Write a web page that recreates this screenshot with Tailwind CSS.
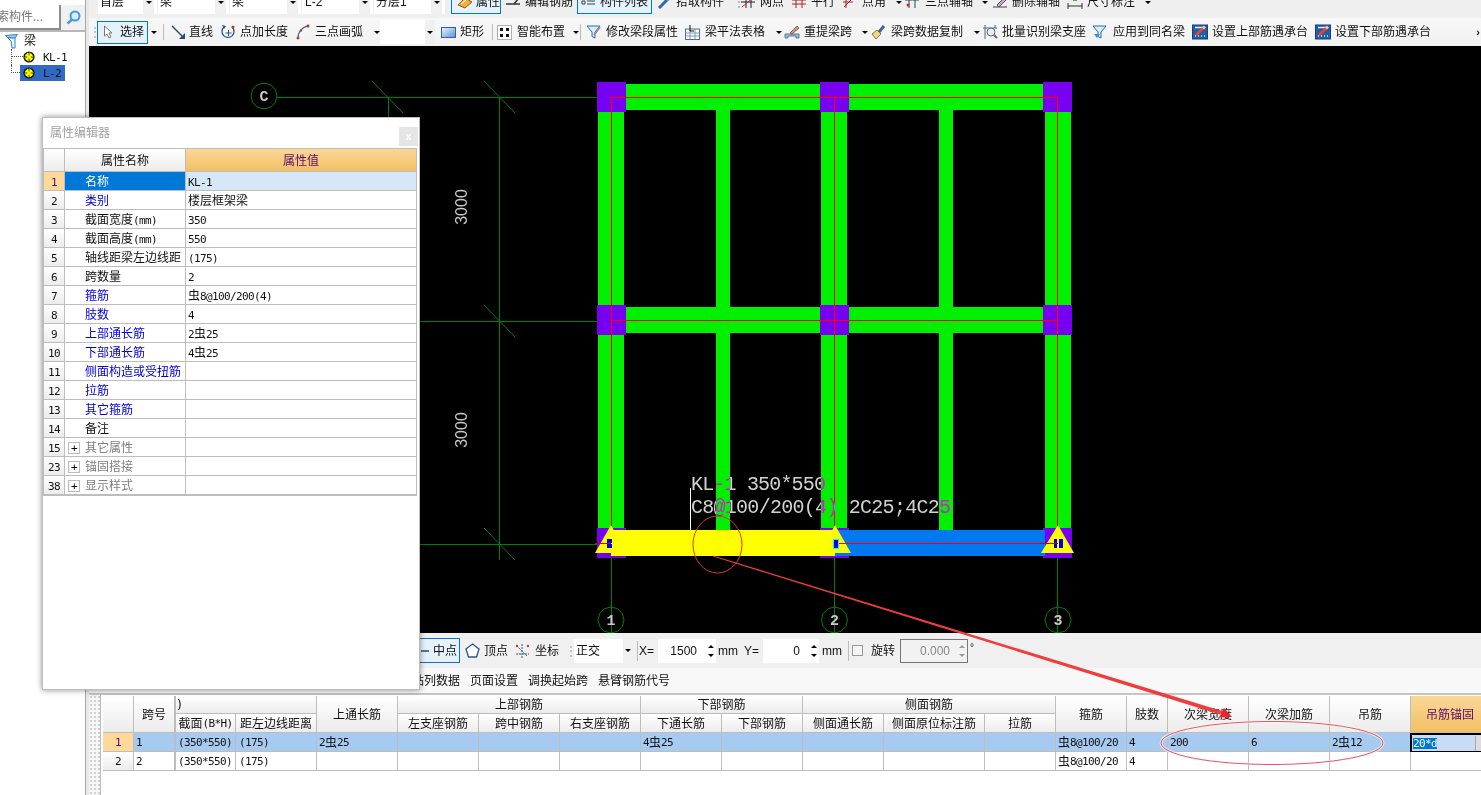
<!DOCTYPE html>
<html lang="zh">
<head>
<meta charset="utf-8">
<title>梁 属性编辑器</title>
<script src="https://cdn.jsdelivr.net/npm/@tailwindcss/browser@4"></script>
</head>
<body class="bg-white">
<div class="relative w-[1481px] h-[795px] overflow-hidden flex bg-white text-[12px] leading-none text-[#111] font-['Liberation_Sans','Noto_Sans_CJK_SC',sans-serif]">

  <!-- shared icons -->
  <svg class="absolute w-0 h-0">
    <defs>
      <polygon id="ax" fill="none" stroke="#008000" points="13,0 11.3,6.5 6.5,11.3 0,13 -6.5,11.3 -11.3,6.5 -13,0 -11.3,-6.5 -6.5,-11.3 0,-13 6.5,-11.3 11.3,-6.5"/>
      <g id="gear"><circle cx="6" cy="6" r="5.6" fill="#111"/><circle cx="6" cy="6" r="4.4" fill="#ff0" stroke="#111" stroke-dasharray="1.5 1.2"/><path d="M6 2v8M2 6h8" stroke="#222" stroke-width=".8"/><circle cx="6" cy="6" r="1.8" fill="#ff0"/></g>
      <g id="rebar"><rect x=".5" y="1" width="15" height="14" fill="#1f5fa8" stroke="#17437a"/><path d="M3 3.500h10M3 12h1M6 12h1M9 12h1M12 12h1" stroke="#e6f0fa" stroke-width="1.500"/><path d="M4 11 11 4.500" stroke="#e8432f" stroke-width="3"/><path d="M11 4.500l2-2" stroke="#f6c0a0" stroke-width="3"/></g>
      <g id="funnel"><path d="M1 2h13l-5 6v6l-3-1.5V8z" fill="#d8ecfa" stroke="#2b6ca8"/></g>
    </defs>
  </svg>

  <!-- left tree panel -->
  <aside class="w-[89px] shrink-0 flex flex-col border-r-[3px] border-[#e8e8e8]">
    <div class="w-[86px] h-full border-r border-[#a8a8a8] flex flex-col">
      <div class="h-[32px] shrink-0 pt-[5px] border-b-2 border-[#b8b8b8] flex">
        <div class="w-[61px] h-[25px] overflow-hidden flex items-center border-r-2 border-b-2 border-[#8c8c8c] text-[#777]"><span class="-ml-[15px] whitespace-nowrap">搜索构件...</span></div>
        <div class="w-[24px] h-[25px] bg-[#f1f1f1] flex items-center justify-center">
          <svg class="w-[15px] h-[15px]" viewBox="0 0 15 15"><circle cx="9" cy="6" r="4.5" fill="#d9eefc" stroke="#3f9be0" stroke-width="2"/><path d="M6 9.500 1.500 13.500" stroke="#3f9be0" stroke-width="2.400"/></svg>
        </div>
      </div>
      <div class="pt-[1px]">
        <div class="h-[16px] flex items-center pl-[5px] gap-[6px]">
          <svg class="w-[13px] h-[15px]" viewBox="0 0 13 15"><path d="M.5 1.500 12.500.5 10 4H3z" fill="#9fd0ef" stroke="#2f83c0"/><path d="M3 4h7v10H7L6 7z" fill="#e6f4fc" stroke="#2f83c0"/></svg>
          <span>梁</span>
        </div>
        <div class="ml-[11px]">
          <div class="h-[16px] flex items-center">
            <div class="self-stretch w-[12px] border-l border-dotted border-[#555]"><div class="h-1/2 border-b border-dotted border-[#555]"></div></div>
            <svg class="w-[12px] h-[12px]" viewBox="0 0 12 12"><use href="#gear"/></svg>
            <span class="ml-[8px] font-['DejaVu_Sans_Mono'] text-[11px] tracking-[-0.62px]">KL-1</span>
          </div>
          <div class="h-[16px] flex items-center">
            <div class="self-start h-1/2 w-[9px] border-l border-b border-dotted border-[#555]"></div>
            <div class="w-[45px] h-[16px] bg-[#316ac5] flex items-center pl-[3px]">
              <svg class="w-[12px] h-[12px]" viewBox="0 0 12 12"><use href="#gear"/></svg>
              <span class="ml-[8px] font-['DejaVu_Sans_Mono'] text-[11px] tracking-[-0.62px]">L-2</span>
            </div>
          </div>
        </div>
      </div>
    </div>
  </aside>

  <main class="flex-1 min-w-0 flex flex-col">
    <!-- toolbar row 1, cut by the window top -->
    <div class="h-[18px] shrink-0 overflow-hidden bg-[#efefef]">
      <div class="-mt-[10px] h-[24px] flex items-center whitespace-nowrap">
        <div class="w-[9px]"></div>
        <div class="w-[59px] h-full bg-white flex items-center pl-[2px] relative"><span>首层</span><span class="ml-auto mr-[3px] w-[11px] h-full bg-[#f0f0f0] flex items-center justify-center"><span class="border-x-[3px] border-t-[3px] border-x-transparent border-t-black"></span></span></div>
        <div class="ml-px w-[71px] h-full bg-white flex items-center pl-[2px]"><span>梁</span><span class="ml-auto mr-[3px] w-[11px] h-full bg-[#f0f0f0] flex items-center justify-center"><span class="border-x-[3px] border-t-[3px] border-x-transparent border-t-black"></span></span></div>
        <div class="ml-px w-[71px] h-full bg-white flex items-center pl-[2px]"><span>梁</span><span class="ml-auto mr-[3px] w-[11px] h-full bg-[#f0f0f0] flex items-center justify-center"><span class="border-x-[3px] border-t-[3px] border-x-transparent border-t-black"></span></span></div>
        <div class="ml-px w-[71px] h-full bg-white flex items-center pl-[3px]"><span>L-2</span><span class="ml-auto mr-[3px] w-[11px] h-full bg-[#f0f0f0] flex items-center justify-center"><span class="border-x-[3px] border-t-[3px] border-x-transparent border-t-black"></span></span></div>
        <div class="ml-px w-[71px] h-full bg-white flex items-center pl-[2px]"><span>分层1</span><span class="ml-auto mr-[3px] w-[11px] h-full bg-[#f0f0f0] flex items-center justify-center"><span class="border-x-[3px] border-t-[3px] border-x-transparent border-t-black"></span></span></div>
        <div class="ml-[6px] w-[50px] h-full border border-[#0078d7] bg-[#e5f1fb] flex items-center pl-[5px] gap-[3px]">
          <svg class="w-[16px] h-[14px]" viewBox="0 0 16 14"><path d="M1 10 8 3l7 4-7 6z" fill="#f0b040" stroke="#8a5a10"/><path d="M4 9l5-4" stroke="#fff"/></svg><span>属性</span>
        </div>
        <div class="ml-[4px] w-[72px] flex items-center gap-[4px]">
          <svg class="w-[16px] h-[14px]" viewBox="0 0 16 14"><path d="M1 9h14M9 9 14 3" stroke="#333" stroke-width="1.500" fill="none"/></svg><span>编辑钢筋</span>
        </div>
        <div class="w-[75px] h-full border border-[#0078d7] bg-[#e5f1fb] flex items-center pl-[3px] gap-[4px]">
          <svg class="w-[15px] h-[14px]" viewBox="0 0 15 14"><path d="M1 6h3v3H1zM6 6h8M6 9h8" stroke="#345" fill="none"/></svg><span>构件列表</span>
        </div>
        <div class="ml-[5px] w-[76px] flex items-center gap-[4px]">
          <svg class="w-[15px] h-[14px]" viewBox="0 0 15 14"><path d="M2 13 10 5" stroke="#2b6ca8" stroke-width="3"/><path d="M10 5l3-3" stroke="#666" stroke-width="3"/></svg><span>拾取构件</span>
        </div>
        <div class="w-[8px] text-[#999] text-center">⋮</div>
        <div class="w-[51px] flex items-center gap-[5px]">
          <svg class="w-[14px] h-[14px]" viewBox="0 0 14 14"><path d="M5 1v12M10 1v12M0 7h14" stroke="#223" fill="none"/><path d="M1 12 13 2" stroke="#c22"/></svg><span>网点</span>
        </div>
        <div class="w-[51px] flex items-center gap-[5px]">
          <svg class="w-[14px] h-[14px]" viewBox="0 0 14 14"><path d="M4 1v12M10 1v12M0 5h14M0 9h14" stroke="#a22" fill="none"/></svg><span>平行</span>
        </div>
        <div class="w-[62px] flex items-center gap-[4px]">
          <svg class="w-[15px] h-[14px]" viewBox="0 0 15 14"><path d="M1 12 11 2M3 1v12M0 7h10" stroke="#a22" fill="none"/></svg><span>点角</span><span class="ml-[6px] border-x-[3px] border-t-[3px] border-x-transparent border-t-black"></span>
        </div>
        <div class="w-[87px] flex items-center gap-[6px]">
          <svg class="w-[14px] h-[14px]" viewBox="0 0 14 14"><path d="M4 1v12M0 5h14M10 1v12" stroke="#345" fill="none"/><circle cx="3" cy="10" r="1.500" fill="#c22"/></svg><span>三点辅轴</span><span class="ml-[3px] border-x-[3px] border-t-[3px] border-x-transparent border-t-black"></span>
        </div>
        <div class="w-[75px] flex items-center gap-[4px]">
          <svg class="w-[16px] h-[14px]" viewBox="0 0 16 14"><path d="M1 12h14" stroke="#345"/><path d="M5 10l7-7 2 2-7 7z" fill="#c9a0d8" stroke="#654"/></svg><span>删除辅轴</span>
        </div>
        <div class="flex items-center gap-[4px]">
          <svg class="w-[16px] h-[14px]" viewBox="0 0 16 14"><path d="M1 11h14M1 8v6M15 8v6" stroke="#333" fill="none"/><rect x="6" y="2" width="4" height="4" fill="#4caf50"/></svg><span>尺寸标注</span><span class="ml-[6px] border-x-[3px] border-t-[3px] border-x-transparent border-t-black"></span>
        </div>
      </div>
    </div>

    <!-- toolbar row 2 -->
    <div class="h-[28px] shrink-0 flex items-center whitespace-nowrap bg-linear-to-b from-[#f7f7f7] to-[#f2f2f2]">
      <div class="w-[8px] text-[#aaa] text-center">⋮</div>
      <div class="w-[51px] h-[23px] border border-[#0078d7] bg-[#e5f1fb] flex items-center pl-[5px] gap-[7px]">
        <svg class="w-[10px] h-[14px]" viewBox="0 0 10 14"><path d="M1.500 1v10l2.500-2 2 4 2-1-2-4h3z" fill="#fff" stroke="#777"/></svg><span>选择</span>
      </div>
      <div class="w-[11px] flex justify-center"><span class="border-x-[3px] border-t-[3px] border-x-transparent border-t-black"></span></div>
      <div class="w-[9px] flex justify-center"><span class="w-px h-[16px] bg-[#bbb]"></span></div>
      <div class="ml-[3px] w-[50px] flex items-center gap-[3px]">
        <svg class="w-[15px] h-[15px]" viewBox="0 0 15 15"><path d="M1 1 13 13" stroke="#244a78" stroke-width="1.400"/><path d="M14 14H8l6-6z" fill="#244a78"/></svg><span>直线</span>
      </div>
      <div class="w-[75px] flex items-center gap-[4px]">
        <svg class="w-[15px] h-[16px]" viewBox="0 0 15 16"><path d="M3 3 A6 6 0 1 0 11 3" fill="none" stroke="#2c5687" stroke-width="1.300"/><path d="M7.500 6v6M4.500 9h6" stroke="#2c5687"/><path d="M1 1l4 1-2 3z" fill="#2c5687"/><circle cx="12" cy="3" r="1.500" fill="#c0392b"/></svg><span>点加长度</span>
      </div>
      <div class="w-[84px] flex items-center gap-[5px]">
        <svg class="w-[14px] h-[16px]" viewBox="0 0 14 16"><path d="M2 14 C2 8 6 3 12 2" fill="none" stroke="#3d6d9e" stroke-width="1.300"/><circle cx="2" cy="14" r="1.500" fill="#c0392b"/><circle cx="5" cy="6.500" r="1.200" fill="#c0392b"/><circle cx="12" cy="2" r="1.500" fill="#c0392b"/></svg><span>三点画弧</span><span class="ml-[6px] border-x-[3px] border-t-[3px] border-x-transparent border-t-black"></span>
      </div>
      <div class="w-[55px] h-[24px] bg-white flex items-center justify-end"><span class="w-[10px] h-full bg-[#f0f0f0] flex items-center justify-center"><span class="border-x-[3px] border-t-[3px] border-x-transparent border-t-black"></span></span></div>
      <div class="ml-[6px] w-[51px] flex items-center gap-[4px]">
        <svg class="w-[15px] h-[11px]" viewBox="0 0 15 11"><defs><linearGradient id="rg" x1="0" y1="0" x2="1" y2="1"><stop offset="0" stop-color="#eef4fc"/><stop offset="1" stop-color="#5c8fd6"/></linearGradient></defs><rect x=".5" y=".5" width="14" height="10" fill="url(#rg)" stroke="#33619e"/></svg><span>矩形</span>
      </div>
      <div class="w-[5px]"><span class="block w-px h-[16px] bg-[#bbb]"></span></div>
      <div class="w-[83px] flex items-center gap-[5px]">
        <svg class="w-[15px] h-[15px]" viewBox="0 0 15 15"><rect x=".5" y=".5" width="14" height="14" fill="#fff" stroke="#666" stroke-dasharray="1 1"/><path d="M3 3h3v3H3zM9 3h3v3H9zM3 9h3v3H3zM9 9h3v3H9z" fill="#111"/></svg><span>智能布置</span><span class="ml-[3px] border-x-[3px] border-t-[3px] border-x-transparent border-t-black"></span>
      </div>
      <div class="w-[6px]"><span class="block w-px h-[16px] bg-[#bbb]"></span></div>
      <div class="w-[99px] flex items-center gap-[4px]">
        <svg class="w-[16px] h-[16px]" viewBox="0 0 16 16"><use href="#funnel"/><path d="M8 11 14 3" stroke="#a88" stroke-width="2"/></svg><span>修改梁段属性</span>
      </div>
      <div class="w-[99px] flex items-center gap-[5px]">
        <svg class="w-[15px] h-[15px]" viewBox="0 0 15 15"><rect x=".5" y="4" width="14" height="10.500" fill="#fff" stroke="#4a6e96"/><path d="M.5 8h14M.5 11h14M5 4v10M10 4v10" stroke="#7d9ab8"/><path d="M5 0v6h4" stroke="#111" fill="none"/></svg><span>梁平法表格</span><span class="ml-[6px] border-x-[3px] border-t-[3px] border-x-transparent border-t-black"></span>
      </div>
      <div class="w-[87px] flex items-center gap-[4px]">
        <svg class="w-[16px] h-[16px]" viewBox="0 0 16 16"><path d="M1 14V10h14v4h-3v-2H4v2z" fill="#9db8d4" stroke="#5d7f9f"/><path d="M6 9 13 2l2 2-7 6z" fill="#d99a7b" stroke="#8a5a4a"/></svg><span>重提梁跨</span><span class="ml-[6px] border-x-[3px] border-t-[3px] border-x-transparent border-t-black"></span>
      </div>
      <div class="w-[111px] flex items-center gap-[5px]">
        <svg class="w-[15px] h-[16px]" viewBox="0 0 15 16"><path d="M1 10 6 6l4 4-5 5z" fill="#e8d98a" stroke="#8f7f3a"/><path d="M8 8l5-6" stroke="#4a5f96" stroke-width="3"/></svg><span>梁跨数据复制</span><span class="ml-[6px] border-x-[3px] border-t-[3px] border-x-transparent border-t-black"></span>
      </div>
      <div class="w-[110px] flex items-center gap-[4px]">
        <svg class="w-[16px] h-[16px]" viewBox="0 0 16 16"><path d="M1 4h14M3 1v14M13 1v3" stroke="#3d6d9e" fill="none"/><circle cx="9" cy="8" r="4" fill="#e8eef4" stroke="#667"/><path d="M12 11l3 3" stroke="#667" stroke-width="2"/></svg><span>批量识别梁支座</span>
      </div>
      <div class="w-[100px] flex items-center gap-[5px]">
        <svg class="w-[16px] h-[16px]" viewBox="0 0 16 16"><use href="#funnel"/><path d="M2 10l3 4 3-4z" fill="#3d8fd6"/></svg><span>应用到同名梁</span>
      </div>
      <div class="w-[123px] flex items-center gap-[4px]">
        <svg class="w-[16px] h-[16px]" viewBox="0 0 16 16"><use href="#rebar"/></svg><span>设置上部筋遇承台</span>
      </div>
      <div class="flex items-center gap-[4px]">
        <svg class="w-[16px] h-[16px]" viewBox="0 0 16 16"><use href="#rebar"/></svg><span>设置下部筋遇承台</span>
      </div>
      <span class="ml-auto mr-[1px] text-[11px] font-bold">›</span>
    </div>

    <!-- drawing canvas -->
    <div class="h-[587px] shrink-0 relative bg-black overflow-hidden">
      <svg class="absolute inset-0 w-full h-full" viewBox="89 46 1392 587" shape-rendering="crispEdges">
        <g stroke="#008000" fill="none">
          <path d="M277 97.500H611M388.500 97V117M499.500 97V560M420 321.500H598M420 544.500H598M611.500 556V633M834.500 556V633M1057.500 556V633"/>
          <g shape-rendering="auto"><path d="M372 81 403 113M484 81 515 113M484 305 515 337M484 528 515 560"/></g>
        </g>
        <g fill="#00f000">
          <rect x="598" y="112" width="26" height="193"/><rect x="598" y="335" width="26" height="195"/>
          <rect x="821" y="112" width="26" height="193"/><rect x="821" y="335" width="26" height="195"/>
          <rect x="1045" y="112" width="26" height="193"/><rect x="1045" y="335" width="26" height="195"/>
          <rect x="716" y="110" width="14" height="420"/><rect x="939" y="110" width="14" height="420"/>
          <rect x="626" y="84" width="194" height="26"/><rect x="849" y="84" width="194" height="26"/>
          <rect x="626" y="307" width="194" height="26"/><rect x="849" y="307" width="194" height="26"/>
        </g>
        <g fill="#7800f0">
          <rect x="597" y="82" width="29" height="30"/><rect x="820" y="82" width="29" height="30"/><rect x="1043" y="82" width="29" height="30"/>
          <rect x="597" y="305" width="29" height="30"/><rect x="820" y="305" width="29" height="30"/><rect x="1043" y="305" width="29" height="30"/>
          <rect x="597" y="528" width="29" height="30"/><rect x="820" y="528" width="29" height="30"/><rect x="1043" y="528" width="29" height="30"/>
        </g>
        <rect x="835" y="530" width="210" height="26" fill="#0078f0"/>
        <rect x="611" y="530" width="224" height="26" fill="#ff0"/>
        <g fill="#ff0" shape-rendering="auto">
          <polygon points="611,525 626,553 595,553"/>
          <polygon points="835,525 851,553 820,553"/>
          <polygon points="1058,525 1074,553 1041,553"/>
        </g>
        <path d="M611 97.500H1058M611 320.500H1058M835 543.500H1058M611.500 97V526M834.500 97V526M1057.500 97V526" stroke="#f00" fill="none"/>
        <path d="M690.500 488V530" stroke="#fff" fill="none"/>
        <g fill="#0000f0">
          <rect x="607" y="539" width="5" height="4"/><rect x="607" y="544" width="5" height="4"/>
          <rect x="833" y="539" width="5" height="9" stroke="#0ff"/>
          <rect x="1054" y="539" width="3" height="9"/><rect x="1059" y="539" width="4" height="9"/>
        </g>
        <path d="M611 543.500H595M1040 543.500H1058" stroke="#c00"/>
        <ellipse cx="717.500" cy="544.500" rx="24.500" ry="28.500" fill="none" stroke="#d23c2a" shape-rendering="auto"/>
        <g shape-rendering="auto">
          <use href="#ax" x="264" y="96"/><use href="#ax" x="611" y="620"/><use href="#ax" x="834.500" y="620"/><use href="#ax" x="1058" y="620"/>
          <g fill="#c8c8c8" font-family="'Liberation Mono',monospace" font-weight="700" text-anchor="middle">
            <text x="264" y="101" font-size="15">C</text>
            <text x="611" y="625" font-size="15">1</text>
            <text x="834.500" y="625" font-size="15">2</text>
            <text x="1058" y="625" font-size="15">3</text>
          </g>
          <g fill="#c8c8c8" font-family="'Liberation Sans',sans-serif" text-anchor="middle" font-size="16">
            <text transform="translate(467 207) rotate(-90)">3000</text>
            <text transform="translate(467 430) rotate(-90)">3000</text>
          </g>
          <g fill="#d2d2d2" font-family="'Liberation Mono',monospace" font-size="20" class="mix-blend-difference">
            <text x="691" y="490" textLength="135">KL-1 350*550</text>
            <text x="691" y="513" textLength="260">C8@100/200(4) 2C25;4C25</text>
          </g>
        </g>
      </svg>
    </div>

    <!-- snap / coordinate bar -->
    <div class="h-[35px] shrink-0 bg-[#f0f0f0] flex items-center whitespace-nowrap pl-[330px]">
      <div class="w-[41px] h-[25px] border border-[#0078d7] bg-[#e5f1fb] flex items-center pl-[1px] gap-[4px]">
        <svg class="w-[8px] h-[6px]" viewBox="0 0 8 6"><path d="M0 3h8" stroke="#244a78" stroke-width="1.500"/></svg><span>中点</span>
      </div>
      <div class="ml-[5px] w-[50px] flex items-center gap-[4px]">
        <svg class="w-[15px] h-[15px]" viewBox="0 0 15 15"><path d="M7.500 1 14 6 11.500 14H3.500L1 6z" fill="#fff" stroke="#2c5687" stroke-width="1.300"/></svg><span>顶点</span>
      </div>
      <div class="w-[50px] flex items-center gap-[5px]">
        <svg class="w-[15px] h-[16px]" viewBox="0 0 15 16"><path d="M7 1v14M1 11h13M2 3l10 10" stroke="#2c5687" stroke-dasharray="2 1" fill="none"/><circle cx="2" cy="3" r="1.200" fill="#c0392b"/><circle cx="13" cy="3" r="1.200" fill="#c0392b"/></svg><span>坐标</span>
      </div>
      <div class="w-[9px] text-[#aaa] text-center">⋮</div>
      <div class="w-[58px] h-[24px] bg-white flex items-center pl-[2px]"><span>正交</span><span class="ml-auto h-full w-[9px] bg-[#f0f0f0] flex items-center justify-center"><span class="border-x-[3px] border-t-[3px] border-x-transparent border-t-black"></span></span></div>
      <div class="ml-[5px] w-px h-[20px] bg-[#bbb]"></div>
      <span class="ml-[1px] w-[19px]">X=</span>
      <div class="w-[47px] h-[24px] bg-white flex items-center justify-end pr-[8px]">1500</div>
      <div class="w-[11px] h-[24px] bg-white flex flex-col items-center justify-center gap-[6px]"><span class="border-x-[3px] border-b-[3px] border-x-transparent border-b-black"></span><span class="border-x-[3px] border-t-[3px] border-x-transparent border-t-black"></span></div>
      <span class="ml-[2px] w-[26px]">mm</span>
      <span class="w-[19px]">Y=</span>
      <div class="w-[45px] h-[24px] bg-white flex items-center justify-end pr-[8px]">0</div>
      <div class="w-[11px] h-[24px] bg-white flex flex-col items-center justify-center gap-[6px]"><span class="border-x-[3px] border-b-[3px] border-x-transparent border-b-black"></span><span class="border-x-[3px] border-t-[3px] border-x-transparent border-t-black"></span></div>
      <span class="ml-[3px] w-[26px]">mm</span>
      <div class="w-px h-[20px] bg-[#bbb]"></div>
      <div class="ml-[3px] w-[11px] h-[11px] border border-[#999] bg-[#f4f4f4]"></div>
      <span class="ml-[8px] w-[24px]">旋转</span>
      <div class="ml-[5px] w-[68px] h-[24px] border border-[#777] bg-[#f2f2f2] flex items-center justify-end pr-[1px] text-[#888]"><span>0.000</span><span class="ml-[7px] flex flex-col items-center gap-[6px] w-[9px]"><span class="border-x-[3px] border-b-[3px] border-x-transparent border-b-[#999]"></span><span class="border-x-[3px] border-t-[3px] border-x-transparent border-t-[#999]"></span></span></div>
      <span class="ml-[2px] text-[10px] self-start mt-[10px]">°</span>
    </div>

    <!-- table tool row -->
    <div class="h-[25px] shrink-0 bg-[#f8f8f8] flex items-center whitespace-nowrap pl-[311px] gap-[10px]">
      <span>粘贴列数据</span><span>页面设置</span><span>调换起始跨</span><span>悬臂钢筋代号</span>
    </div>

    <!-- span table -->
    <div class="flex-1 min-h-0 flex border-t-2 border-[#c4c4c4] overflow-hidden">
      <div class="w-[12px] shrink-0 border-r border-[#bbb] bg-[#f6f6f6] bg-[radial-gradient(#d0d0d0_1px,transparent_1px)] bg-[length:4px_4px]"></div>
      <div class="w-[2px] shrink-0"></div>
      <div class="grid h-[77px] mt-px grid-cols-[31px_41px_61px_81px_81px_81px_81px_81px_81px_81px_81px_101px_71px_71px_41px_81px_81px_81px_81px] grid-rows-[18px_19px_19px_19px] shrink-0 font-['DejaVu_Sans_Mono','Noto_Sans_CJK_SC',sans-serif] text-[11px] tracking-[-0.62px] [&_i]:not-italic [&_i]:text-[12px] [&_i]:tracking-normal [&>div]:pt-[1px] [&>div]:border-r [&>div]:border-b [&>div]:border-[#bdbdbd] [&>div]:flex [&>div]:items-center">
        <div class="row-span-2 bg-linear-to-b from-white to-[#ececec]"></div>
        <div class="row-span-2 justify-center bg-linear-to-b from-white to-[#ececec]"><i>跨号</i></div>
        <div class="col-span-2 bg-linear-to-b from-white to-[#ececec] border-l border-l-[#bdbdbd]"><i>)</i></div>
        <div class="row-span-2 justify-center bg-linear-to-b from-white to-[#ececec]"><i>上通长筋</i></div>
        <div class="col-span-3 justify-center bg-linear-to-b from-white to-[#ececec]"><i>上部钢筋</i></div>
        <div class="col-span-2 justify-center bg-linear-to-b from-white to-[#ececec]"><i>下部钢筋</i></div>
        <div class="col-span-3 justify-center bg-linear-to-b from-white to-[#ececec]"><i>侧面钢筋</i></div>
        <div class="row-span-2 justify-center bg-linear-to-b from-white to-[#ececec]"><i>箍筋</i></div>
        <div class="row-span-2 justify-center bg-linear-to-b from-white to-[#ececec]"><i>肢数</i></div>
        <div class="row-span-2 justify-center bg-linear-to-b from-white to-[#ececec]"><i>次梁宽度</i></div>
        <div class="row-span-2 justify-center bg-linear-to-b from-white to-[#ececec]"><i>次梁加筋</i></div>
        <div class="row-span-2 justify-center bg-linear-to-b from-white to-[#ececec]"><i>吊筋</i></div>
        <div class="row-span-2 justify-start pl-[15px] bg-linear-to-b from-[#fad797] to-[#f2c063] text-[#5c0a73]"><i>吊筋锚固</i></div>

        <div class="justify-center bg-linear-to-b from-white to-[#ececec] border-l border-l-[#bdbdbd]"><i>截面</i>(B*H)</div>
        <div class="justify-center bg-linear-to-b from-white to-[#ececec]"><i>距左边线距离</i></div>
        <div class="justify-center bg-linear-to-b from-white to-[#ececec]"><i>左支座钢筋</i></div>
        <div class="justify-center bg-linear-to-b from-white to-[#ececec]"><i>跨中钢筋</i></div>
        <div class="justify-center bg-linear-to-b from-white to-[#ececec]"><i>右支座钢筋</i></div>
        <div class="justify-center bg-linear-to-b from-white to-[#ececec]"><i>下通长筋</i></div>
        <div class="justify-center bg-linear-to-b from-white to-[#ececec]"><i>下部钢筋</i></div>
        <div class="justify-center bg-linear-to-b from-white to-[#ececec]"><i>侧面通长筋</i></div>
        <div class="justify-center bg-linear-to-b from-white to-[#ececec]"><i>侧面原位标注筋</i></div>
        <div class="justify-center bg-linear-to-b from-white to-[#ececec]"><i>拉筋</i></div>

        <div class="justify-center bg-[#ffd89a] text-[#5c0a73]">1</div>
        <div class="bg-[#a6caf0] pl-[2px]">1</div>
        <div class="bg-[#a6caf0] pl-[2px] border-l border-l-black">(350*550)</div>
        <div class="bg-[#a6caf0] pl-[3px]">(175)</div>
        <div class="bg-[#a6caf0] pl-[2px]">2<i>虫</i>25</div>
        <div class="bg-[#a6caf0]"></div><div class="bg-[#a6caf0]"></div><div class="bg-[#a6caf0]"></div>
        <div class="bg-[#a6caf0] pl-[2px]">4<i>虫</i>25</div>
        <div class="bg-[#a6caf0]"></div><div class="bg-[#a6caf0]"></div><div class="bg-[#a6caf0]"></div><div class="bg-[#a6caf0]"></div>
        <div class="bg-[#a6caf0] pl-[2px]"><i>虫</i>8@100/20</div>
        <div class="bg-[#a6caf0] pl-[2px]">4</div>
        <div class="bg-[#a6caf0] pl-[2px]">200</div>
        <div class="bg-[#a6caf0] pl-[2px]">6</div>
        <div class="bg-[#a6caf0] pl-[2px]">2<i>虫</i>12</div>
        <div class="bg-[#c9dcf5] pl-[1px] border-2 !border-black -ml-px"><span class="bg-[#0078d7] text-white">20*d</span><span class="ml-[38px] w-[8px] h-full bg-[#dcdcdc] border-l border-[#aaa]"></span></div>

        <div class="justify-center bg-linear-to-b from-white to-[#ececec]">2</div>
        <div class="pl-[2px]">2</div>
        <div class="pl-[2px] border-l border-l-black">(350*550)</div>
        <div class="pl-[3px]">(175)</div>
        <div></div><div></div><div></div><div></div><div></div><div></div><div></div><div></div><div></div>
        <div class="pl-[2px]"><i>虫</i>8@100/20</div>
        <div class="pl-[2px]">4</div>
        <div></div><div></div><div></div><div></div>
      </div>
    </div>
  </main>

  <!-- floating property editor -->
  <section class="absolute left-[42px] top-[117px] w-[378px] h-[573px] bg-white border border-[#bdbdbd] shadow-[0_0_6px_rgba(0,0,0,0.45)]">
    <div class="h-[30px] flex items-center pl-[7px] text-[#a3a3a3]">
      <span>属性编辑器</span>
      <div class="ml-auto mr-[1px] mt-[6px] w-[19px] h-[19px] bg-[#e5e5e5] text-white font-bold flex items-center justify-center text-[11px]">x</div>
    </div>
    <div class="w-[374px] border border-[#bdbdbd] grid grid-cols-[21px_121px_231px] grid-rows-[23px_repeat(17,19px)] font-['DejaVu_Sans_Mono','Noto_Sans_CJK_SC',sans-serif] text-[11px] tracking-[-0.62px] [&_i]:not-italic [&_i]:text-[12px] [&_i]:tracking-normal [&>div]:pt-[2px] [&>div]:border-r [&>div]:border-b [&>div]:border-[#bdbdbd] [&>div]:flex [&>div]:items-center">
      <div class="bg-linear-to-b from-white to-[#ececec]"></div>
      <div class="justify-center bg-linear-to-b from-white to-[#ececec]"><i>属性名称</i></div>
      <div class="justify-center bg-linear-to-b from-[#fad797] to-[#f2c063] text-[#5c0a73]"><i>属性值</i></div>

      <div class="justify-center bg-[#ffd89a] text-[#5c0a73]">1</div><div class="pl-[20px] bg-[#0078d7] text-white"><i>名称</i></div><div class="pl-[2px] bg-[#d6e8f8]">KL-1</div>
      <div class="justify-center bg-linear-to-b from-white to-[#ececec]">2</div><div class="pl-[20px] text-[#0000e0]"><i>类别</i></div><div class="pl-[2px]"><i>楼层框架梁</i></div>
      <div class="justify-center bg-linear-to-b from-white to-[#ececec]">3</div><div class="pl-[20px]"><i>截面宽度</i>(mm)</div><div class="pl-[2px]">350</div>
      <div class="justify-center bg-linear-to-b from-white to-[#ececec]">4</div><div class="pl-[20px]"><i>截面高度</i>(mm)</div><div class="pl-[2px]">550</div>
      <div class="justify-center bg-linear-to-b from-white to-[#ececec]">5</div><div class="pl-[20px]"><i>轴线距梁左边线距</i></div><div class="pl-[2px]">(175)</div>
      <div class="justify-center bg-linear-to-b from-white to-[#ececec]">6</div><div class="pl-[20px]"><i>跨数量</i></div><div class="pl-[2px]">2</div>
      <div class="justify-center bg-linear-to-b from-white to-[#ececec]">7</div><div class="pl-[20px] text-[#0000e0]"><i>箍筋</i></div><div class="pl-[2px]"><i>虫</i>8@100/200(4)</div>
      <div class="justify-center bg-linear-to-b from-white to-[#ececec]">8</div><div class="pl-[20px] text-[#0000e0]"><i>肢数</i></div><div class="pl-[2px]">4</div>
      <div class="justify-center bg-linear-to-b from-white to-[#ececec]">9</div><div class="pl-[20px] text-[#0000e0]"><i>上部通长筋</i></div><div class="pl-[2px]">2<i>虫</i>25</div>
      <div class="justify-center bg-linear-to-b from-white to-[#ececec]">10</div><div class="pl-[20px] text-[#0000e0]"><i>下部通长筋</i></div><div class="pl-[2px]">4<i>虫</i>25</div>
      <div class="justify-center bg-linear-to-b from-white to-[#ececec]">11</div><div class="pl-[20px] text-[#0000e0]"><i>侧面构造或受扭筋</i></div><div></div>
      <div class="justify-center bg-linear-to-b from-white to-[#ececec]">12</div><div class="pl-[20px] text-[#0000e0]"><i>拉筋</i></div><div></div>
      <div class="justify-center bg-linear-to-b from-white to-[#ececec]">13</div><div class="pl-[20px] text-[#0000e0]"><i>其它箍筋</i></div><div></div>
      <div class="justify-center bg-linear-to-b from-white to-[#ececec]">14</div><div class="pl-[20px]"><i>备注</i></div><div></div>
      <div class="justify-center bg-linear-to-b from-white to-[#ececec]">15</div><div class="pl-[3px] text-[#808080]"><span class="w-[12px] h-[12px] mr-[5px] border border-[#bbb] text-black flex items-center justify-center text-[11px]">+</span><i>其它属性</i></div><div></div>
      <div class="justify-center bg-linear-to-b from-white to-[#ececec]">23</div><div class="pl-[3px] text-[#808080]"><span class="w-[12px] h-[12px] mr-[5px] border border-[#bbb] text-black flex items-center justify-center text-[11px]">+</span><i>锚固搭接</i></div><div></div>
      <div class="justify-center bg-linear-to-b from-white to-[#ececec]">38</div><div class="pl-[3px] text-[#808080]"><span class="w-[12px] h-[12px] mr-[5px] border border-[#bbb] text-black flex items-center justify-center text-[11px]">+</span><i>显示样式</i></div><div></div>
    </div>
  </section>

  <!-- hand-drawn red annotation over the whole window -->
  <svg class="absolute inset-0 w-[1481px] h-[795px] pointer-events-none" viewBox="0 0 1481 795">
    <polygon points="713,555.500 1222,711 1220,714.500 713,556.500" fill="#f03c3c"/>
    <polygon points="1232,717 1219,717.500 1224,708" fill="#e8232a"/>
    <ellipse cx="1272" cy="743" rx="111" ry="21.500" fill="none" stroke="#fff" stroke-opacity=".55" stroke-width="3"/>
    <ellipse cx="1272" cy="743" rx="111" ry="21.500" fill="none" stroke="#ee4f5a"/>
  </svg>
</div>
</body>
</html>
